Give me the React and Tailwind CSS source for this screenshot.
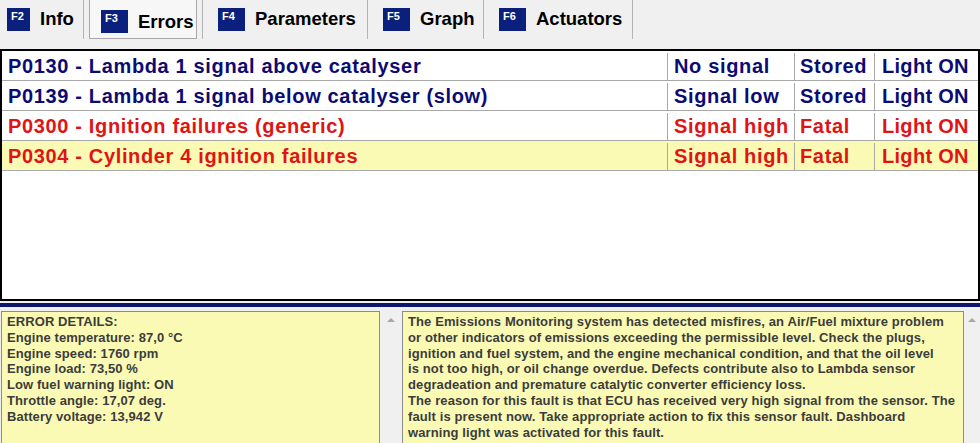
import React from "react";

const Badge = ({ k, w = "w-[27px]" }) => (
  <div className={`${w} h-[23px] shrink-0 bg-[#0b1f7c] text-white text-[11px] font-bold leading-none pt-[3px] pl-[4px]`}>
    {k}
  </div>
);

const Tab = ({ k, label, w }) => (
  <div className={`${w} h-[39px] shrink-0 border-r border-[#b4b4b4] flex items-center pl-[15px] gap-[10px] pb-[1px]`}>
    <Badge k={k} />
    <span className="text-[18.5px] font-bold text-black">{label}</span>
  </div>
);

const rows = [
  { code: "P0130 - Lambda 1 signal above catalyser", sig: "No signal", st: "Stored", red: false, hl: false },
  { code: "P0139 - Lambda 1 signal below catalyser (slow)", sig: "Signal low", st: "Stored", red: false, hl: false },
  { code: "P0300 - Ignition failures (generic)", sig: "Signal high", st: "Fatal", red: true, hl: false },
  { code: "P0304 - Cylinder 4 ignition failures", sig: "Signal high", st: "Fatal", red: true, hl: true },
];

const details = [
  "ERROR DETAILS:",
  "Engine temperature: 87,0 °C",
  "Engine speed: 1760 rpm",
  "Engine load: 73,50 %",
  "Low fuel warning light: ON",
  "Throttle angle: 17,07 deg.",
  "Battery voltage: 13,942 V",
];

const desc = [
  "The Emissions Monitoring system has detected misfires, an Air/Fuel mixture problem",
  "or other indicators of emissions exceeding the permissible level. Check the plugs,",
  "ignition and fuel system, and the engine mechanical condition, and that the oil level",
  "is not too high, or oil change overdue. Defects contribute also to Lambda sensor",
  "degradeation and premature catalytic converter efficiency loss.",
  "The reason for this fault is that ECU has received very high signal from the sensor. The",
  "fault is present now. Take appropriate action to fix this sensor fault. Dashboard",
  "warning light was activated for this fault.",
];

const Scroll = ({ w }) => (
  <div className={`${w} shrink-0 bg-[#f0f0f0] flex justify-center pt-[6px]`}>
    <svg width="8" height="5" viewBox="0 0 8 5">
      <path d="M0 5 L4 1 L8 5 Z" fill="#a8a8a8" />
    </svg>
  </div>
);

export default function App() {
  return (
    <div className="w-[980px] h-[443px] overflow-hidden bg-[#f0f0f0] font-['Liberation_Sans',Arial,sans-serif]">
      {/* Tabs */}
      <div className="h-[49px] flex items-start">
        <div className="w-[84px] h-[39px] shrink-0 border-r border-[#b4b4b4] flex items-center pl-[7px] gap-[10px] pb-[1px]">
          <Badge k="F2" w="w-[23px]" />
          <span className="text-[18.5px] font-bold text-black">Info</span>
        </div>
        <div className="ml-[5px] w-[108px] h-[39px] shrink-0 border border-t-0 border-[#a8a8a8] bg-[#f7f7f7] flex items-center pl-[11px] gap-[10px] pt-[5px]">
          <Badge k="F3" />
          <span className="text-[18.5px] font-bold text-black">Errors</span>
        </div>
        <div className="w-[6px] h-[39px] shrink-0 border-r border-[#b4b4b4]" />
        <Tab k="F4" label="Parameters" w="w-[165px]" />
        <Tab k="F5" label="Graph" w="w-[116px]" />
        <Tab k="F6" label="Actuators" w="w-[149px]" />
      </div>

      {/* Error table */}
      <div className="h-[252px] bg-white border-2 border-black">
        {rows.map((r, i) => {
          const color = r.red ? "text-[#e01414]" : "text-[#0b0b73]";
          const bg = r.hl ? "bg-[#fafab4]" : "bg-white";
          return (
            <div key={i} className={`flex h-[30px] border-b border-[#a8a8a8] ${bg} ${color} text-[20px] font-bold leading-[27px] pt-[2px] tracking-[0.65px] whitespace-nowrap`}>
              <div className="w-[666px] pl-[6px] border-r border-[#a8a8a8]">{r.code}</div>
              <div className="w-[127px] pl-[6px] border-r border-[#a8a8a8]">{r.sig}</div>
              <div className="w-[80px] pl-[5px] border-r border-[#a8a8a8]">{r.st}</div>
              <div className="flex-1 pl-[7px] tracking-[0.3px]">Light ON</div>
            </div>
          );
        })}
      </div>

      {/* Divider */}
      <div className="mt-[2px] h-[4px] bg-[#0c166a]" />

      {/* Details */}
      <div className="mt-[4px] flex h-[132px]">
        <div className="w-[379px] shrink-0 ml-[1px] bg-[#fafab4] border border-[#8c8c8c] border-b-0 pl-[5px] pt-[2px] text-[13px] font-bold text-[#3c3c3c] leading-[15.8px] tracking-[0.08px] whitespace-nowrap">
          {details.map((d, i) => (
            <div key={i}>{d}</div>
          ))}
        </div>
        <Scroll w="w-[22px]" />
        <div className="w-[562px] shrink-0 bg-[#fafab4] border border-[#8c8c8c] border-b-0 pl-[5px] pt-[2px] text-[13px] font-bold text-[#3c3c3c] leading-[15.8px] tracking-[0.11px] whitespace-nowrap overflow-hidden">
          {desc.map((d, i) => (
            <div key={i}>{d}</div>
          ))}
        </div>
        <Scroll w="flex-1" />
      </div>
    </div>
  );
}
